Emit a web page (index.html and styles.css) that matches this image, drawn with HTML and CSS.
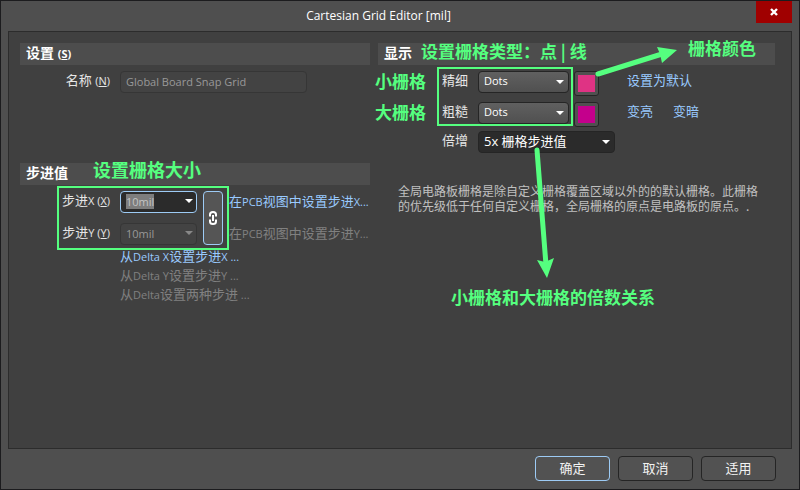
FILE: index.html
```html
<!DOCTYPE html>
<html lang="zh-CN">
<head>
<meta charset="utf-8">
<title>Cartesian Grid Editor [mil]</title>
<link rel="stylesheet" href="styles.css">
</head>
<body>
<form class="dialog">
  <header class="titlebar">
    <h1 class="title">Cartesian Grid Editor [mil]</h1>
    <button class="close" type="button" aria-label="关闭"><svg width="8" height="8" viewBox="0 0 8 8"><path d="M1 1l6 6M7 1l-6 6"/></svg></button>
  </header>

  <main class="panel">
    <div class="column">
      <section class="settings">
        <h2 class="heading">设置 <small>(<u>S</u>)</small></h2>
        <div class="row">
          <label class="label" for="name">名称 <small>(<u>N</u>)</small></label>
          <input class="field name" id="name" type="text" value="Global Board Snap Grid" disabled>
        </div>
      </section>

      <section class="steps">
        <h2 class="heading">步进值</h2>
        <div class="step-grid">
          <label class="label" for="step-x">步进<small>X (<u>X</u>)</small></label>
          <span class="combo"><input class="field" id="step-x" type="text" value="10mil"></span>
          <button class="chain" type="button" aria-label="链接"><svg width="10" height="16" viewBox="0 0 10 16"><path d="M2 6.5V4.5Q2 2 5 2t3 2.500v2M2 9.500v2Q2 14 5 14t3-2.500v-2M5 5v6"/></svg></button>
          <a class="link pick" href="#">在<small>PCB</small>视图中设置步进<small>X...</small></a>
          <label class="label" for="step-y">步进<small>Y (<u>Y</u>)</small></label>
          <span class="combo off"><input class="field" id="step-y" type="text" value="10mil" disabled></span>
          <a class="link pick off">在<small>PCB</small>视图中设置步进<small>Y...</small></a>
        </div>
        <nav class="deltas">
          <a class="link" href="#">从<small>Delta X</small>设置步进<small>X ...</small></a>
          <a class="link off">从<small>Delta Y</small>设置步进<small>Y ...</small></a>
          <a class="link off">从<small>Delta</small>设置两种步进<small> ...</small></a>
        </nav>
        <span class="note note-size">设置栅格大小</span>
        <span class="frame frame-steps"></span>
      </section>
    </div>

    <section class="column display">
      <h2 class="heading">显示</h2>
      <div class="row">
        <label class="label" for="fine">精细</label>
        <select class="field select" id="fine"><option>Dots</option><option>Lines</option></select>
        <button class="swatch" type="button" aria-label="精细颜色"><span class="color fine"></span></button>
        <a class="link" href="#">设置为默认</a>
      </div>
      <div class="row compact">
        <label class="label" for="coarse">粗糙</label>
        <select class="field select" id="coarse"><option>Dots</option><option>Lines</option></select>
        <button class="swatch" type="button" aria-label="粗糙颜色"><span class="color coarse"></span></button>
        <a class="link" href="#">变亮</a>
        <a class="link" href="#">变暗</a>
      </div>
      <div class="row">
        <label class="label" for="multiple">倍增</label>
        <select class="field select dark" id="multiple"><option>5x 栅格步进值</option></select>
      </div>
      <p class="help">全局电路板栅格是除自定义栅格覆盖区域以外的的默认栅格。此栅格的优先级低于任何自定义栅格，全局栅格的原点是电路板的原点。.</p>

      <span class="note note-type">设置栅格类型：点 | 线</span>
      <span class="note note-fine">小栅格</span>
      <span class="note note-coarse">大栅格</span>
      <span class="note note-color">栅格颜色</span>
      <span class="note note-multiple">小栅格和大栅格的倍数关系</span>
      <span class="frame frame-type"></span>
      <svg class="arrows" width="397" height="250" viewBox="0 0 397 250" aria-hidden="true">
        <path class="shaft" d="M220 31L284 11M159 107L168 222"/>
        <path class="head" d="M279 4L299 7L284 20L282 11ZM159 217L167 219L176 215L169 235Z"/>
      </svg>
    </section>
  </main>

  <footer class="actions">
    <button class="button primary" type="submit">确定</button>
    <button class="button" type="button">取消</button>
    <button class="button" type="button">适用</button>
  </footer>
</form>
<script src="script.js"></script>
</body>
</html>
```
FILE: styles.css
```css
* { box-sizing: border-box; }

body {
  margin: 0;
  color: #e6e6e6;
  font: 13px/18px "Open Sans", "Noto Sans CJK SC", sans-serif;
}

small { font-size: 11px; }

button, input, select { font: inherit; color: inherit; margin: 0; }

.dialog {
  display: flex;
  flex-direction: column;
  min-height: 100vh;
  border: 1px solid #1c1c1e;
  background: #4f4f4f;
}

.titlebar {
  display: flex;
  align-items: flex-start;
  height: 30px;
  padding-right: 7px;
}

.title {
  flex: 1;
  margin: 0;
  text-align: center;
  font-size: 12px;
  font-weight: 400;
  line-height: 29px;
  color: #fff;
}

.close {
  display: grid;
  place-items: center;
  width: 36px;
  height: 22px;
  padding: 0;
  border: 0;
  background: #a00000;
}

.close path { stroke: #fff; stroke-width: 2.4; fill: none; }

.panel {
  flex: 1;
  display: grid;
  grid-template-columns: minmax(0, 350fr) minmax(0, 397fr);
  gap: 8px;
  margin: 0 7px;
  padding: 11px 16px 11px 11px;
  border: 1px solid #2c2c2c;
  background: #404040;
}

.heading {
  margin: 0 0 6px;
  padding: 0 6px;
  height: 22px;
  line-height: 20px;
  font-size: 14px;
  font-weight: 700;
  color: #fff;
  background: #4d4d4d;
}

.label { text-align: right; white-space: nowrap; }

.row { display: flex; align-items: flex-start; height: 31px; }

.row.compact { height: 29px; }

.row .label { width: 90px; margin-right: 10px; }

.field {
  height: 22px;
  padding: 0 5px 2px;
  border: 1px solid #252525;
  border-radius: 4px;
  outline: 0;
  font-size: 11px;
  background: #2b2b2b;
}

.field:disabled {
  color: #999;
  border-color: #363636;
  background: #434343;
}

.name { width: 187px; }

.settings { height: 120px; }

.steps, .display { position: relative; }

.step-grid {
  display: grid;
  grid-template-columns: 94px 77px 20px 1fr;
  grid-template-rows: 22px 22px;
  gap: 10px 6px;
}

.step-grid .label { grid-column: 1; padding-right: 4px; }

.combo { grid-column: 2; position: relative; }

.combo::after {
  content: "";
  position: absolute;
  top: 8px;
  right: 4px;
  border: 4px solid transparent;
  border-top-color: #fff;
  border-bottom: 0;
}

.combo.off::after { border-top-color: #888; }

.combo .field { display: block; width: 100%; }

.combo .field:enabled { color: #bdbdbd; border-color: #9dcbf5; }

.combo .field::selection { color: #c4c4c4; background: #7d7d7d; }

.chain {
  grid-column: 3;
  grid-row: 1 / 3;
  display: grid;
  place-items: center;
  padding: 0;
  border: 1px solid #9dcbf5;
  border-radius: 4px;
  background: #555;
}

.chain path { stroke: #fff; stroke-width: 2; fill: none; }

.link { color: #99caff; text-decoration: none; white-space: nowrap; }

.link.off { color: #808080; }

.row .link + .link { margin-left: 20px; }

.pick { grid-column: 4; line-height: 20px; }

.deltas {
  display: flex;
  flex-direction: column;
  align-items: flex-start;
  padding: 2px 0 0 100px;
  line-height: 19px;
}

.select {
  width: 91px;
  appearance: none;
  color: #fff;
  background-image: url("data:image/svg+xml,%3Csvg xmlns='http://www.w3.org/2000/svg' width='8' height='4'%3E%3Cpath d='M0 0h8L4 4z' fill='white'/%3E%3C/svg%3E"), linear-gradient(#606060, #505050);
  background-position: right 4px top 8px, 0 0;
  background-size: 8px 4px, auto;
  background-repeat: no-repeat;
}

.select.dark {
  width: 137px;
  font-size: 13px;
  background-image: url("data:image/svg+xml,%3Csvg xmlns='http://www.w3.org/2000/svg' width='8' height='4'%3E%3Cpath d='M0 0h8L4 4z' fill='white'/%3E%3C/svg%3E");
}

.swatch {
  width: 25px;
  height: 25px;
  margin: 0 28px 0 5px;
  padding: 3px;
  border: 1px solid #252525;
  border-radius: 3px;
  background: #505050;
}

.color { display: block; height: 17px; }

.color.fine { background: #df3384; }

.color.coarse { background: #c4008c; }

.help {
  margin: 21px 0 0;
  padding: 0 14px 0 20px;
  font: 12px/15px "Noto Sans CJK SC", sans-serif;
  color: #c0c0c0;
}

.note {
  position: absolute;
  font: 700 17px/22px "Noto Sans CJK SC", sans-serif;
  color: #55ff7f;
  white-space: nowrap;
}

.note-size { left: 73px; top: -5px; font-size: 18px; }
.note-type { left: 43px; top: -3px; }
.note-fine { left: -3px; top: 27px; }
.note-coarse { left: -3px; top: 58px; }
.note-color { left: 310px; top: -6px; }
.note-multiple { left: 73px; top: 243px; }

.frame { position: absolute; border: 2px solid #55ff7f; pointer-events: none; }

.frame-steps { left: 37px; top: 23px; width: 172px; height: 64px; }
.frame-type { left: 59px; top: 24px; width: 136px; height: 59px; }

.arrows { position: absolute; left: 0; top: 0; pointer-events: none; }

.shaft { stroke: #55ff7f; stroke-width: 5; stroke-linecap: round; fill: none; }

.head { fill: #55ff7f; }

.actions {
  display: flex;
  justify-content: flex-end;
  gap: 8px;
  padding: 7px 23px 8px;
}

.button {
  width: 75px;
  height: 25px;
  padding: 0 0 2px;
  border: 1px solid #252525;
  border-radius: 4px;
  line-height: 20px;
  color: #f2f2f2;
  background: #525252;
}

.button.primary { border-color: #9dcbf5; }
```
FILE: script.js
```js
const stepX = document.getElementById("step-x");
stepX.focus();
stepX.select();
```
